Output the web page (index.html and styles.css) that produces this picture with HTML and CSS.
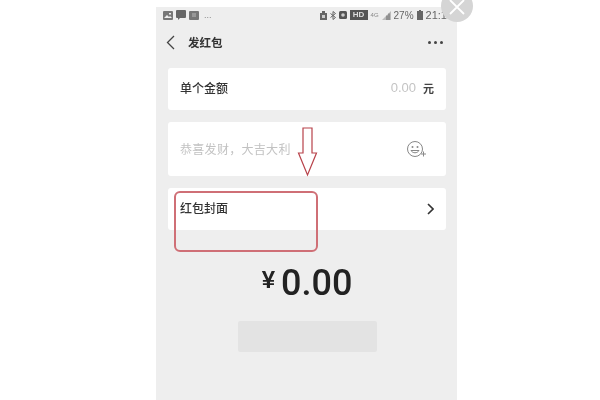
FILE: index.html
```html
<!DOCTYPE html>
<html lang="zh">
<head>
    <meta charset="UTF-8">
    <meta name="viewport" content="width=device-width, initial-scale=1.0">
    <title>发红包</title>
    <link rel="stylesheet" href="styles.css">
</head>
<body>
    <div class="phone">
        <div class="status">
            <div class="status-left">
                <svg class="ico" width="10" height="9" viewBox="0 0 10 9"><rect width="10" height="9" rx="1" fill="#777"/><path d="M1 7l3-3 2 2 1-1 2 2z" fill="#eee"/><rect x="6" y="2" width="2" height="1.5" fill="#eee"/></svg>
                <svg class="ico" width="10" height="10" viewBox="0 0 10 10"><path d="M0 1a1 1 0 0 1 1-1h8a1 1 0 0 1 1 1v6a1 1 0 0 1-1 1H4l-2 2V8H1a1 1 0 0 1-1-1z" fill="#666"/></svg>
                <svg class="ico" width="10" height="9" viewBox="0 0 10 9"><rect width="10" height="9" rx="1" fill="#777"/><path d="M3 3h4M3 5h4" stroke="#bbb"/></svg>
                <span class="dots-small">...</span>
            </div>
            <div class="status-right">
                <svg width="7" height="9" viewBox="0 0 7 9"><path d="M2 0h3v2h2v7H0V2h2z" fill="#666"/><rect x="2" y="4" width="3" height="3" fill="#ccc"/></svg>
                <svg width="6" height="9" viewBox="0 0 6 9"><path d="M0.500 2.500l5 4L3 8.500V.5l2.500 2-5 4" fill="none" stroke="#666" stroke-width="1"/></svg>
                <svg width="8" height="8" viewBox="0 0 8 8"><rect width="8" height="8" rx="1.500" fill="#555"/><circle cx="4" cy="4" r="1.800" fill="#ccc"/></svg>
                <span class="hd">HD</span>
                <span class="net">4G</span>
                <svg width="9" height="9" viewBox="0 0 9 9"><path d="M0 9L9 0v9z" fill="#bbb"/><path d="M5 9V4.500M7 9V2.500" stroke="#666"/></svg>
                <span class="batt-text">27%</span>
                <svg width="6" height="10" viewBox="0 0 6 10"><path d="M2 0h2v1h2v9H0V1h2z" fill="#666"/></svg>
                <span class="clock">21:1</span>
            </div>
        </div>

        <div class="nav">
            <div class="nav-left">
                <svg width="9" height="15" viewBox="0 0 9 15"><path d="M8 1L1.500 7.500 8 14" fill="none" stroke="#444" stroke-width="1.300"/></svg>
                <span class="nav-title">发红包</span>
            </div>
            <div class="more"><i></i><i></i><i></i></div>
        </div>

        <div class="content">
            <div class="card">
                <span class="label">单个金额</span>
                <span class="amount-right"><span class="zero">0.00</span><span class="yuan">元</span></span>
            </div>
            <div class="card card-tall">
                <span class="hint">恭喜发财，大吉大利</span>
                <svg class="smile" width="21" height="18" viewBox="0 0 21 18">
                    <circle cx="9" cy="9" r="7.500" fill="none" stroke="#888" stroke-width="1"/>
                    <circle cx="6.500" cy="7" r="1" fill="#888"/>
                    <circle cx="11.500" cy="7" r="1" fill="#888"/>
                    <path d="M5 10.500c1.500 3 6.500 3 8 0z" fill="none" stroke="#888"/>
                    <path d="M17.500 11.500v5M15 14h5" stroke="#888"/>
                </svg>
            </div>
            <div class="card">
                <span class="label">红包封面</span>
                <svg class="chevron" width="7" height="12" viewBox="0 0 7 12"><path d="M1 1l5 5-5 5" fill="none" stroke="#333" stroke-width="1.600"/></svg>
            </div>

            <div class="total"><span class="yen">¥</span><span class="sum">0.00</span></div>
            <div class="send"></div>
        </div>

        <!-- red marks drawn over the screenshot -->
        <svg class="arrow" width="21" height="50" viewBox="0 0 21 50">
            <path d="M6 1h9v25h4.500L10.500 48 1.500 26H6z" fill="#fff" fill-opacity="0.6" stroke="#b8424a" stroke-width="1.200"/>
        </svg>
        <div class="red-box"></div>
    </div>

    <div class="close">
        <svg width="20" height="20" viewBox="0 0 20 20"><path d="M3 2l14 14M17 2L3 16" stroke="#fff" stroke-width="1.800"/></svg>
    </div>
</body>
</html>
```

FILE: styles.css
```css
html, body {
    height: 100%;
}
body {
    margin: 0;
    background-color: #fff;
    font-family: "Noto Sans CJK SC", "Liberation Sans", sans-serif;
    overflow: hidden;
    position: relative;
}
.phone {
    position: absolute;
    left: 156px;
    top: 7px;
    width: 301px;
    height: 393px;
    background-color: #eee;
    filter: blur(0.5px);
}
.status {
    height: 16px;
    padding: 0 6px 0 7px;
    display: flex;
    justify-content: space-between;
    align-items: center;
}
.status-left, .status-right {
    display: flex;
    align-items: center;
}
.status-left {
    gap: 3px;
}
.status-right {
    gap: 3px;
    margin-right: 4px;
}
.dots-small {
    font-family: "Liberation Sans", sans-serif;
    font-size: 9px;
    color: #888;
    margin-left: 2px;
}
.hd {
    background-color: #555;
    color: #ddd;
    font-family: "Liberation Sans", sans-serif;
    font-size: 8px;
    font-weight: bold;
    line-height: 10px;
    padding: 0 2px;
    width: 14px;
    text-align: center;
}
.net {
    font-family: "Liberation Sans", sans-serif;
    font-size: 6px;
    color: #888;
}
.batt-text, .clock {
    font-family: "Liberation Sans", sans-serif;
    font-size: 11px;
    color: #666;
}
.batt-text {
    font-size: 10px;
    margin-left: 0;
}
.nav {
    height: 30px;
    padding: 8px 14px 0 10px;
    display: flex;
    justify-content: space-between;
    align-items: center;
    box-sizing: border-box;
}
.nav-left {
    display: flex;
    align-items: center;
    gap: 13px;
}
.nav-title {
    font-size: 11.500px;
    font-weight: 700;
    color: #333;
}
.more {
    display: flex;
    gap: 3px;
}
.more i {
    width: 3px;
    height: 3px;
    border-radius: 50%;
    background-color: #444;
}
.content {
    padding: 15px 11px 0 12px;
}
.card {
    height: 42px;
    margin-bottom: 12px;
    padding: 0 12px;
    background-color: #fff;
    border-radius: 3px;
    display: flex;
    justify-content: space-between;
    align-items: center;
}
.card-tall {
    height: 54px;
    padding-right: 19px;
}
.label {
    font-size: 12px;
    font-weight: 500;
    color: #333;
    margin-top: -3px;
}
.amount-right {
    display: flex;
    align-items: center;
    gap: 7px;
    margin-top: -3px;
}
.zero {
    font-family: "Liberation Sans", sans-serif;
    font-size: 13px;
    color: #c4c4c4;
}
.yuan {
    font-size: 11px;
    font-weight: 700;
    color: #444;
}
.hint {
    font-size: 12px;
    letter-spacing: 0.3px;
    color: #c2c2c2;
    margin-top: -2px;
}
.chevron {
    margin-right: 0;
}
.total {
    margin-top: 36px;
    display: flex;
    justify-content: center;
    align-items: center;
    gap: 6px;
    color: #222;
    height: 34px;
    padding-right: 0;
}
.yen {
    font-family: "Liberation Sans", sans-serif;
    font-size: 24px;
    font-weight: bold;
    margin-top: -7px;
}
.sum {
    font-family: Roboto, sans-serif;
    font-weight: 500;
    font-size: 36px;
}
.send {
    margin: 21px auto 0;
    width: 139px;
    height: 31px;
    background-color: #e3e3e3;
    border-radius: 2px;
}
.arrow {
    position: absolute;
    left: 141px;
    top: 120px;
}
.red-box {
    position: absolute;
    left: 18px;
    top: 184px;
    width: 144px;
    height: 61px;
    border: 2px solid #cf6f76;
    border-radius: 6px;
    box-sizing: border-box;
}
.close {
    position: absolute;
    left: 441px;
    top: -10px;
    width: 32px;
    height: 32px;
    border-radius: 50%;
    background-color: #d5d5d5;
    display: flex;
    align-items: flex-end;
    justify-content: center;
    padding-bottom: 4px;
    box-sizing: border-box;
}
```
